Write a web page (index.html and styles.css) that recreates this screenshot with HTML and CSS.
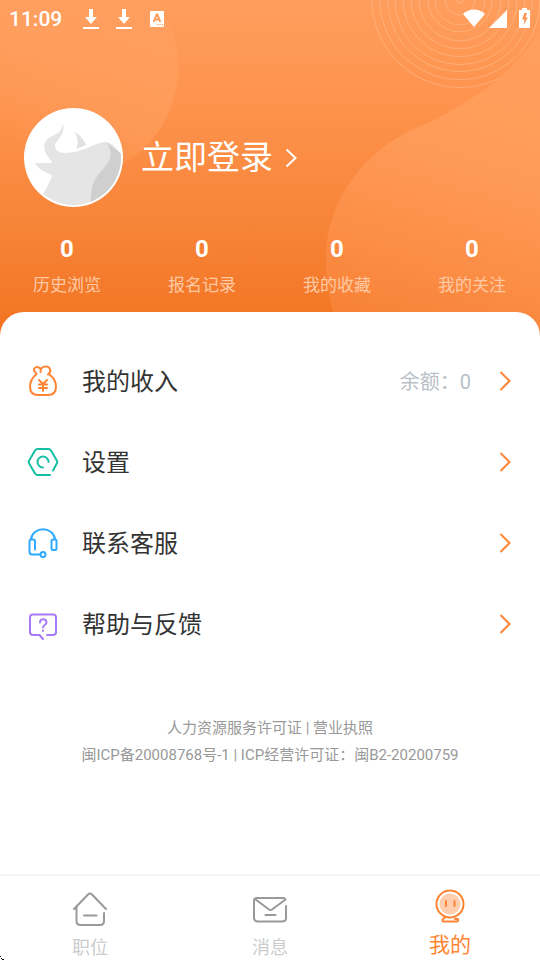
FILE: index.html
```html
<!DOCTYPE html>
<html lang="zh-CN">
<head>
<meta charset="utf-8">
<meta name="viewport" content="width=device-width, initial-scale=1">
<title>我的</title>
<link rel="stylesheet" href="styles.css">
</head>
<body>
<div class="app">
  <header class="hero">
    <svg class="hero-art" viewBox="0 0 540 340" preserveAspectRatio="none" aria-hidden="true">
      <defs>
        <linearGradient id="blobLeft" gradientUnits="userSpaceOnUse" x1="150" y1="40" x2="60" y2="180">
          <stop offset="0" stop-color="#ff9f5f" stop-opacity="0.85"/>
          <stop offset="0.5" stop-color="#ff9f5f" stop-opacity="0.6"/>
          <stop offset="1" stop-color="#ff9f5f" stop-opacity="0"/>
        </linearGradient>
        <linearGradient id="blobRight" x1="0.6" y1="0" x2="0.4" y2="1">
          <stop offset="0" stop-color="#ff9e5d"/>
          <stop offset="0.35" stop-color="#ff9c5a"/>
          <stop offset="0.7" stop-color="#fc8f48"/>
          <stop offset="1" stop-color="#f78135"/>
        </linearGradient>
      </defs>
      <path fill="url(#blobLeft)" d="M0 0H154C170 20 178 43 178 68C178 108 157 146 124 164C90 182 40 146 0 136Z"/>
      <g fill="none" stroke="#ffc092" stroke-opacity="0.55">
        <circle cx="460" cy="0" r="3"/><circle cx="460" cy="0" r="15"/><circle cx="460" cy="0" r="25"/>
        <circle cx="460" cy="0" r="32"/><circle cx="460" cy="0" r="41"/><circle cx="460" cy="0" r="49"/>
        <circle cx="460" cy="0" r="57"/><circle cx="460" cy="0" r="65"/><circle cx="460" cy="0" r="72"/>
        <circle cx="460" cy="0" r="80"/><circle cx="460" cy="0" r="88"/>
      </g>
      <path fill="url(#blobRight)" d="M540 30C520 67 480 99 421 127C370 146 326 198 326 260C326 288 331 312 342 340H540Z"/>
    </svg>

    <div class="status">
      <time class="clock">11:09</time>
      <svg class="download" viewBox="0 0 16 22" aria-hidden="true"><path fill="#fff" d="M6 1h4v8h4l-6 7-6-7h4zM0 19h16v2H0z"/></svg>
      <svg class="download" viewBox="0 0 16 22" aria-hidden="true"><path fill="#fff" d="M6 1h4v8h4l-6 7-6-7h4zM0 19h16v2H0z"/></svg>
      <svg class="badge" viewBox="0 0 16 18" aria-hidden="true">
        <rect x="1" y="1" width="14" height="16" rx="1" fill="#fff"/>
        <path fill="none" stroke="#ff9d5c" stroke-width="2" d="M4.700 12L7.600 4.500h.8L11.300 12M6 9.500h4"/>
        <path fill="#ff9d5c" d="M8 14h1.200v1.200H8zM10.400 14h1.200v1.200h-1.200zM12.800 14H14v1.200h-1.200z"/>
      </svg>
      <svg class="signals" viewBox="0 0 70 22" aria-hidden="true">
        <path fill="#fff" d="M1 8C7 2 17 2 23 8L12 21zM27 22L45 4V22z"/>
        <path fill="#fff" d="M60 4V2h5v2h3v17a1 1 0 0 1-1 1h-9a1 1 0 0 1-1-1V4z"/>
        <path fill="#ff9452" d="M62.500 7H65L63.500 11.500H66L61.500 19L62.500 13.500H60z"/>
      </svg>
    </div>

    <a class="login" href="#login">
      <svg class="avatar" viewBox="0 0 99 99" aria-hidden="true">
        <defs><clipPath id="face"><circle cx="49.500" cy="49.500" r="47.500"/></clipPath></defs>
        <circle cx="49.500" cy="49.500" r="49.500" fill="#fff"/>
        <g clip-path="url(#face)">
          <path fill="#e5e5e5" d="M11 55H26C29 55 27 52 25 50C19 43 18 34 26 29C33 26 38 24 39 15C41 24 37 28 33 33C28 40 33 45 42 45C57 45 69 36 80 34C88 33 94 42 98 48V99H10C20 86 24 78 28 68C26 64 17 65 11 55Z"/>
          <path fill="#e1e1e1" d="M51 24C57 28 60 32 62 37L52 41C55 35 54 31 51 24Z"/>
          <path fill="#cfcfcf" d="M82 34L99 47V99H67C66 81 69 72 78 62C87 53 90 44 82 34Z"/>
        </g>
      </svg>
      <span class="login-text">立即登录</span>
      <svg class="login-arrow" viewBox="0 0 12 20" aria-hidden="true"><path d="M1.500 1.500L10.500 10L1.500 18.500"/></svg>
    </a>

    <nav class="stats" aria-label="记录">
      <a href="#history"><b>0</b><span>历史浏览</span></a>
      <a href="#applications"><b>0</b><span>报名记录</span></a>
      <a href="#favorites"><b>0</b><span>我的收藏</span></a>
      <a href="#following"><b>0</b><span>我的关注</span></a>
    </nav>
  </header>

  <main class="panel">
    <ul class="menu">
      <li><a href="#income">
        <svg class="menu-icon" viewBox="0 0 32 32" stroke="#ff8534" aria-hidden="true">
          <path d="M9.500 8.500C5 5.500 7.500 1.500 11 2.200C12 2.400 13 3 13.500 4M13.500 7C13.500 .5 20.500 .5 22.500 3C24 5.500 23 8 21 9.500M9.500 9C5 13 3 17 3 21.500C3 27 6 30 11 30H21C26 30 29 27 29 21.500C29 17 27 13 22.500 9.500"/>
          <path d="M12 15L16 19L20 15M12 19.500H20M12 23H20M16 19V26"/>
        </svg>
        <span class="menu-label">我的收入</span>
        <span class="balance">余额：0</span>
        <svg class="arrow" viewBox="0 0 12 20" aria-hidden="true"><path d="M1.500 1L10.500 10L1.500 19"/></svg>
      </a></li>
      <li><a href="#settings">
        <svg class="menu-icon" viewBox="0 0 32 32" stroke="#15bfa4" aria-hidden="true">
          <path d="M23 29H10.500Q9 29 8 27.500L2.500 18Q1 16 2.500 14L8 4.500Q9 3 10.500 3H21.500Q23 3 24 4.500L29.500 14Q31 16 29.500 18L26 24.500M16 21.500A5.500 5.500 0 1 1 21.500 16"/>
        </svg>
        <span class="menu-label">设置</span>
        <svg class="arrow" viewBox="0 0 12 20" aria-hidden="true"><path d="M1.500 1L10.500 10L1.500 19"/></svg>
      </a></li>
      <li><a href="#service">
        <svg class="menu-icon" viewBox="0 0 32 32" stroke="#30aaff" aria-hidden="true">
          <path d="M4 12C6-1 26-1 28 12M13.500 27.500H5Q2.500 27.500 2.500 24.500V14.500Q2.500 12.500 4.500 12.500H6Q8 12.500 8 14.500V22.500"/>
          <rect x="24.500" y="12.500" width="5" height="10.500" rx="1.500"/><circle cx="16" cy="27.500" r="2.500"/>
        </svg>
        <span class="menu-label">联系客服</span>
        <svg class="arrow" viewBox="0 0 12 20" aria-hidden="true"><path d="M1.500 1L10.500 10L1.500 19"/></svg>
      </a></li>
      <li><a href="#help">
        <svg class="menu-icon" viewBox="0 0 32 32" stroke="#a97af8" aria-hidden="true">
          <path d="M20 27H26Q29 27 29 24V9.500Q29 6.500 26 6.500H6Q3 6.500 3 9.500V24Q3 27 6 27H12.500L16 31"/>
          <path d="M13 14.500C13 10 19.500 10 19.500 14.500C19.500 17 16 16.500 16 19.500M16 22.500V23"/>
        </svg>
        <span class="menu-label">帮助与反馈</span>
        <svg class="arrow" viewBox="0 0 12 20" aria-hidden="true"><path d="M1.500 1L10.500 10L1.500 19"/></svg>
      </a></li>
    </ul>
    <footer class="legal">
      <p><a href="#license">人力资源服务许可证</a> | <a href="#business">营业执照</a></p>
      <p>闽ICP备20008768号-1 | ICP经营许可证：闽B2-20200759</p>
    </footer>
  </main>

  <nav class="tabs" aria-label="主导航">
    <a href="#jobs">
      <svg class="tab-icon" viewBox="0 0 36 36" aria-hidden="true"><path d="M2 18L16 3.500Q18 1.500 20 3.500L34 18M4.500 16V30Q4.500 34 8.500 34H28Q32 34 32 30V22M12 24.500H24.500"/></svg>
      <span>职位</span>
    </a>
    <a href="#messages">
      <svg class="tab-icon" viewBox="0 0 36 36" aria-hidden="true"><path d="M34 15V27Q34 30.500 30 30.500H6Q2 30.500 2 26.500V10Q2 7 5 7H31Q33 7 33.500 8.500L20 18.500Q18.500 19.500 17 18.500L3 8M13.500 24H23.500"/></svg>
      <span>消息</span>
    </a>
    <a class="active" href="#me" aria-current="page">
      <svg class="tab-icon" viewBox="0 0 36 36" aria-hidden="true">
        <circle cx="18" cy="16" r="13.500"/><circle class="fill" cx="18" cy="16" r="10.500"/>
        <path d="M14 13V18M22.500 13V18M13.500 29L10.500 31.500V32.500Q10.500 33.500 11.500 33.500H25Q26 33.500 26 32.500V31H23"/>
      </svg>
      <span>我的</span>
    </a>
  </nav>
  <svg class="corner" viewBox="0 0 4 4" aria-hidden="true"><path d="M0 0h1v1H0zM1 2h1v1H1zM2 3h2v1H2z"/></svg>
</div>
</body>
</html>
```
FILE: styles.css
```css
* { box-sizing: border-box; }
body {
  margin: 0;
  background: #fff;
  color: #333;
  font-family: Roboto, "Noto Sans CJK SC", sans-serif;
}
a { color: inherit; text-decoration: none; }
svg { display: block; flex: none; }
p, ul { margin: 0; padding: 0; }

.app {
  position: relative;
  display: flex;
  flex-direction: column;
  min-height: 100vh;
}

.hero {
  position: relative;
  padding-bottom: 40px;
  color: #fff;
  background: linear-gradient(#ff9e5e 0, #fd914a 36%, #f78438 66%, #f27321 100%);
}
.hero-art {
  position: absolute;
  inset: 0;
  width: 100%;
  height: 100%;
}
.status, .login, .stats { position: relative; }

.status {
  display: flex;
  align-items: center;
  height: 37px;
  padding: 0 8px 0 9px;
}
.clock {
  margin-right: 21px;
  font-size: 21px;
  font-weight: 500;
}
.download { width: 16px; height: 22px; margin-right: 17px; }
.badge { width: 16px; height: 18px; }
.signals { width: 70px; height: 22px; margin: -3px 0 0 auto; }

.login {
  display: flex;
  align-items: center;
  margin-top: 71px;
  padding-left: 24px;
}
.avatar { width: 99px; height: 99px; }
.login-text {
  margin: 0 12px 0 18px;
  font-size: 33px;
  line-height: 48px;
}
.login-arrow { width: 12px; height: 20px; }
.login-arrow path, .arrow path {
  fill: none;
  stroke: #fff;
  stroke-width: 2;
}

.stats {
  display: grid;
  grid-template-columns: repeat(4, 1fr);
  margin-top: 27px;
  text-align: center;
}
.stats a {
  display: flex;
  flex-direction: column;
  gap: 8px;
  padding-right: 1px;
}
.stats b { font-size: 24px; line-height: 30px; }
.stats span { color: #ffc9a4; font-size: 17px; line-height: 26px; }

.panel {
  position: relative;
  flex: 1;
  margin-top: -26px;
  padding-top: 28px;
  border-radius: 24px 24px 0 0;
  background: #fff;
}
.menu { list-style: none; }
.menu a {
  display: flex;
  align-items: center;
  height: 81px;
  padding: 0 29px 0 27px;
}
.menu-icon {
  width: 32px;
  height: 32px;
  fill: none;
  stroke-width: 2;
  stroke-linecap: round;
  stroke-linejoin: round;
}
.menu-label {
  flex: 1;
  margin-left: 23px;
  padding-bottom: 2px;
  font-size: 24px;
}
.balance { margin-right: 28px; color: #b9c0c7; font-size: 20px; }
.arrow { width: 12px; height: 20px; }
.arrow path { stroke: #ff8534; }

.legal {
  padding: 51px 16px 24px;
  color: #999;
  font-size: 15px;
  line-height: 27px;
  text-align: center;
}

.tabs {
  display: grid;
  grid-template-columns: repeat(3, 1fr);
  height: 86px;
  border-top: 2px solid #f5f5f5;
}
.tabs a {
  display: flex;
  flex-direction: column;
  align-items: center;
  padding-top: 15px;
  color: #ccc;
  font-size: 18px;
  line-height: 26px;
}
.tab-icon {
  width: 36px;
  height: 36px;
  margin-bottom: 8px;
  fill: none;
  stroke: #999;
  stroke-width: 2;
  stroke-linecap: round;
  stroke-linejoin: round;
}
.tabs .active { padding-top: 12px; color: #ff8534; font-size: 21px; }
.active .tab-icon { stroke: #ff8534; }
.active .fill { fill: #ffceae; stroke: none; }

.corner {
  position: absolute;
  left: 0;
  bottom: 0;
  width: 4px;
  height: 4px;
}
```
